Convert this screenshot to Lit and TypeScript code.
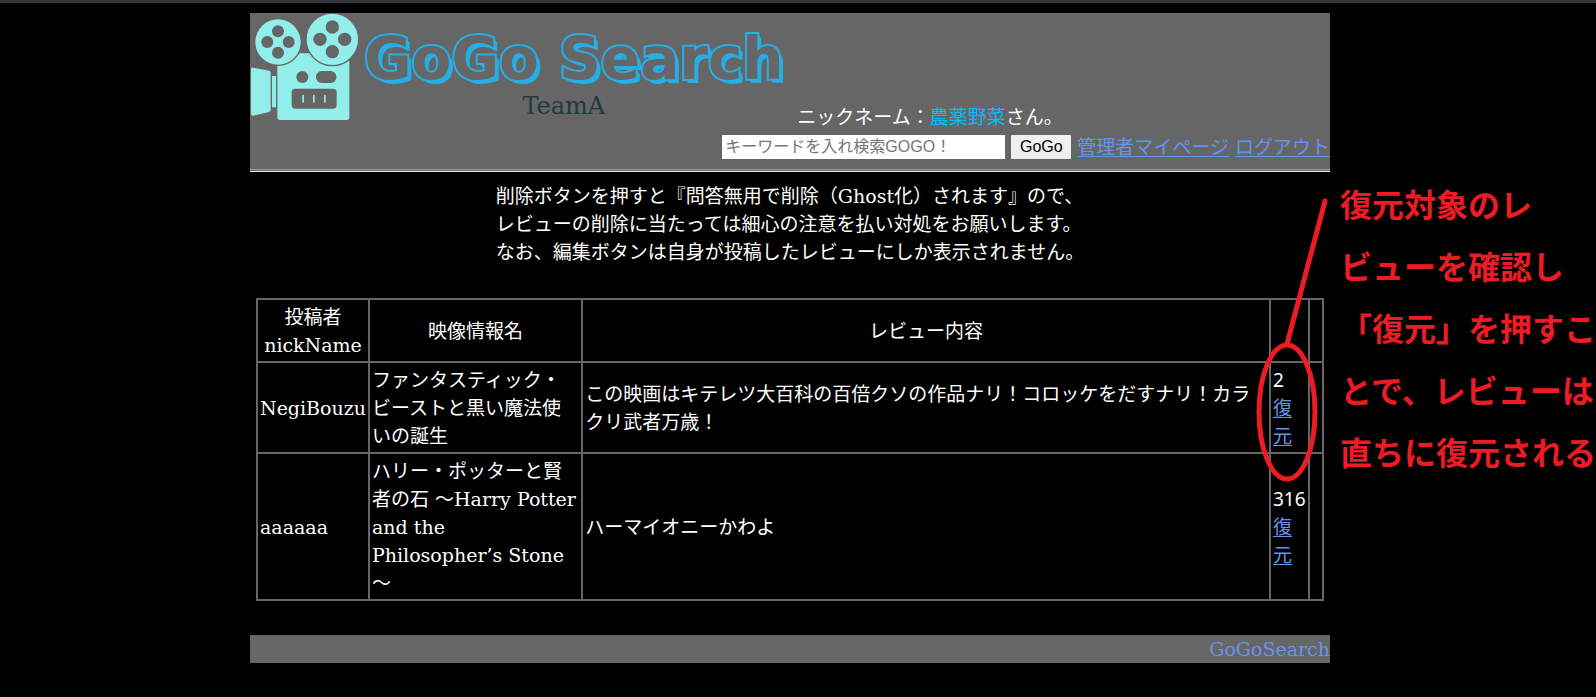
import { LitElement, html, svg, css } from "lit";
import { customElement, state } from "lit/decorators.js";

interface Review {
  nickname: string;
  title: string;
  body: string;
  id: number;
}

@customElement("camera-logo")
class CameraLogo extends LitElement {
  static styles = css`
    :host { display: block; }
    .camera { display: block; width: 110px; height: 110px; }
    .body { fill: #91eeea; }
    .hole { fill: #666; }
    .rim { fill: #91eeea; stroke: #666; stroke-width: 4; }
  `;

  render() {
    const reel = (cx: number, cy: number, r: number, gap: number, hole: number) => svg`
      <circle class="rim" cx=${cx} cy=${cy} r=${r + 2}></circle>
      <circle class="hole" cx=${cx} cy=${cy - gap} r=${hole}></circle>
      <circle class="hole" cx=${cx} cy=${cy + gap} r=${hole}></circle>
      <circle class="hole" cx=${cx - gap} cy=${cy} r=${hole}></circle>
      <circle class="hole" cx=${cx + gap} cy=${cy} r=${hole}></circle>`;
    return html`
      <svg class="camera" viewBox="30 39 330 330" role="img" aria-label="GoGo Search">
        <path class="body" d="M33 208Q33 202 39 203L87 212Q92 213 92 218V330Q92 335 87 336L39 347Q33 348 33 342Z"></path>
        <rect class="body" x="96" y="228" width="12" height="94"></rect>
        <path class="body" d="M112 198L180 160H215L328 182V352Q328 360 320 360H120Q112 360 112 352Z"></path>
        ${reel(114, 126, 68, 32, 18)}
        ${reel(277, 118, 77, 37, 20)}
        <circle class="hole" cx="187" cy="231" r="18"></circle>
        <rect class="hole" x="228" y="213" width="61" height="36" rx="17"></rect>
        <rect class="hole" x="155" y="266" width="135" height="60" rx="11"></rect>
        <rect class="body" x="187" y="285" width="5" height="23"></rect>
        <rect class="body" x="219" y="285" width="5" height="23"></rect>
        <rect class="body" x="252" y="285" width="5" height="23"></rect>
      </svg>`;
  }
}

@customElement("app-root")
class AppRoot extends LitElement {
  @state() private reviews: Review[] = [
    {
      nickname: "NegiBouzu",
      title: "ファンタスティック・ビーストと黒い魔法使いの誕生",
      body: "この映画はキテレツ大百科の百倍クソの作品ナリ！コロッケをだすナリ！カラクリ武者万歳！",
      id: 2,
    },
    {
      nickname: "aaaaaa",
      title: "ハリー・ポッターと賢者の石 ～Harry Potter and the Philosopher’s Stone ～",
      body: "ハーマイオニーかわよ",
      id: 316,
    },
  ];

  static styles = css`
    :host {
      display: block;
      box-sizing: border-box;
      min-height: 100vh;
      padding: 0 16px 32px 0;
      border-top: 3px solid #35353c;
      background: #000;
      color: #fff;
      font: 19px/28px "DejaVu Serif", "Noto Sans CJK JP", serif;
      overflow: hidden;
    }
    a { color: cornflowerblue; text-underline-offset: 2px; text-decoration-thickness: 1px; }
    .page { position: relative; max-width: 1080px; margin: 10px auto 0; }
    .header { background: #666; }
    .top { display: flex; justify-content: space-between; height: 156px; }
    .brand { display: flex; align-items: flex-start; gap: 4px; }
    .wordmark { display: flex; flex-direction: column; align-items: center; padding-top: 16px; }
    .name {
      margin: 0;
      white-space: nowrap;
      font: bold 58px/60px "DejaVu Sans", sans-serif;
      color: #666;
      -webkit-text-stroke: 4px #27aee6;
      stroke-linejoin: round;
      paint-order: stroke fill;
      text-shadow: 1px 1px #27aee6, 2px 2px #27aee6, 3px 3px #27aee6, 4px 4px #27aee6;
    }
    .team { margin: 0 0 0 -20px; font-size: 24px; line-height: 34px; color: #1f3a40; }
    .account { flex: none; margin-left: -64px; padding-top: 90px; }
    .greeting { margin: 0; padding-left: 75px; }
    .nickname { color: deepskyblue; }
    .search { display: flex; align-items: center; gap: 6px; height: 32px; }
    .keyword {
      box-sizing: border-box;
      width: 283px;
      height: 24px;
      padding: 0 3px;
      border: 0;
      border-radius: 0;
      background: #fff;
      font: 16px/24px "Liberation Sans", "Noto Sans CJK JP", sans-serif;
    }
    .keyword::placeholder { color: #757575; }
    .go {
      box-sizing: border-box;
      width: 60px;
      height: 24px;
      padding: 0;
      border: 0;
      border-radius: 1px;
      background: #efefef;
      color: #000;
      font: 16px/24px "Liberation Sans", sans-serif;
    }
    .rule { margin: 0; height: 1px; border: 0; border-top: 1px solid #9a9a9a; border-bottom: 1px solid #eee; }
    .notice { width: fit-content; margin: 10px auto 0; }
    .reviews {
      width: calc(100% - 12px);
      margin: 32px 6px 0;
      table-layout: fixed;
      border-collapse: collapse;
    }
    .reviews th, .reviews td { border: 2px solid #666; padding: 3px 2px 2px; }
    .reviews th { font-weight: normal; }
    .reviews td { text-align: left; vertical-align: middle; }
    .col-name { width: 112px; }
    .col-title { width: 20%; }
    .col-action { width: 39px; }
    .col-extra { width: 14px; }
    .id { font-family: "Noto Sans", sans-serif; }
    .footer { margin-top: 34px; background: #666; text-align: right; }
    .footer a { text-decoration: none; }
    .marker {
      position: absolute;
      top: 182px;
      right: 0;
      width: 80px;
      height: 292px;
      fill: none;
      stroke: #ed1c24;
      stroke-width: 5;
      stroke-linecap: round;
      pointer-events: none;
    }
    .callout {
      position: absolute;
      top: 159px;
      left: calc(100% + 10px);
      margin: 0;
      white-space: nowrap;
      color: #ed1c24;
      font: bold 32px/62px "Noto Sans CJK JP", sans-serif;
    }
  `;

  render() {
    return html`
      <div class="page">
        <header class="header">
          <div class="top">
            <div class="brand">
              <camera-logo></camera-logo>
              <div class="wordmark">
                <h1 class="name">GoGo Search</h1>
                <p class="team">TeamA</p>
              </div>
            </div>
            <div class="account">
              <p class="greeting">ニックネーム：<span class="nickname">農薬野菜</span>さん。</p>
              <form class="search" @submit=${(e: Event) => e.preventDefault()}>
                <input class="keyword" type="text" aria-label="キーワード" placeholder="キーワードを入れ検索GOGO！" />
                <button class="go" type="submit">GoGo</button>
                <a href="#mypage">管理者マイページ</a>
                <a href="#logout">ログアウト</a>
              </form>
            </div>
          </div>
          <hr class="rule" />
        </header>
        <main>
          <p class="notice">
            削除ボタンを押すと『問答無用で削除（Ghost化）されます』ので、<br />
            レビューの削除に当たっては細心の注意を払い対処をお願いします。<br />
            なお、編集ボタンは自身が投稿したレビューにしか表示されません。
          </p>
          <table class="reviews">
            <colgroup>
              <col class="col-name" /><col class="col-title" /><col /><col class="col-action" /><col class="col-extra" />
            </colgroup>
            <thead>
              <tr><th>投稿者<br />nickName</th><th>映像情報名</th><th>レビュー内容</th><th></th><th></th></tr>
            </thead>
            <tbody>
              ${this.reviews.map((r) => html`
                <tr>
                  <td>${r.nickname}</td>
                  <td>${r.title}</td>
                  <td>${r.body}</td>
                  <td><span class="id">${r.id}</span> <a href="#restore-${r.id}">復元</a></td>
                  <td></td>
                </tr>`)}
            </tbody>
          </table>
        </main>
        <footer class="footer"><a href="#top">GoGoSearch</a></footer>
        <svg class="marker" viewBox="0 0 80 292" aria-hidden="true">
          <path d="M75 6L37 149"></path>
          <ellipse cx="37" cy="217" rx="28" ry="67"></ellipse>
        </svg>
        <p class="callout">復元対象のレ<br />ビューを確認し<br />「復元」を押すこ<br />とで、レビューは<br />直ちに復元される</p>
      </div>`;
  }
}
